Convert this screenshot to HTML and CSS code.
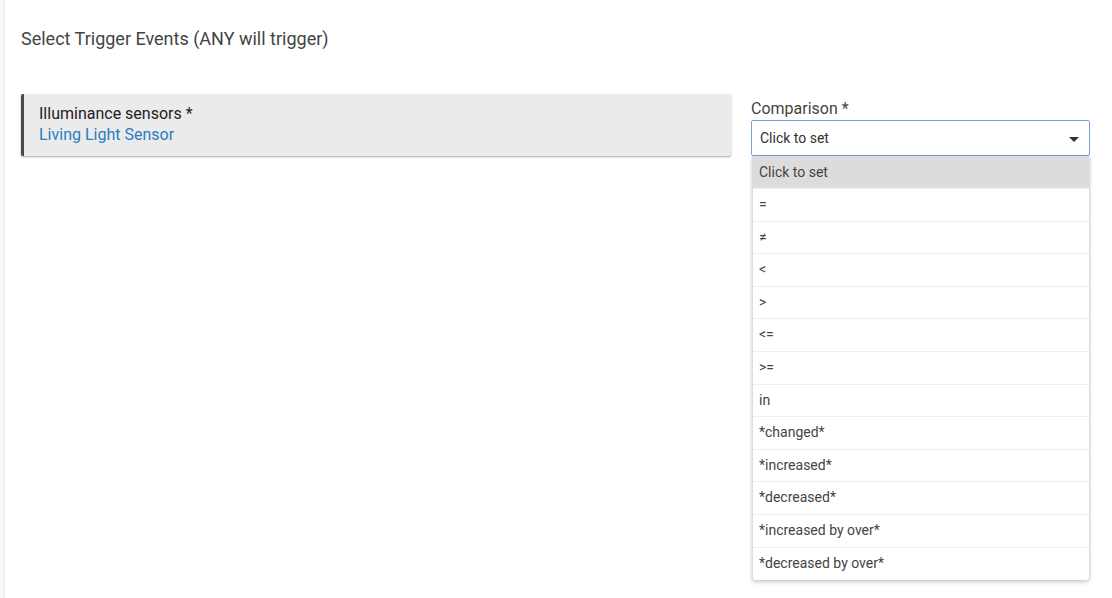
FILE: index.html
```html
<!DOCTYPE html>
<html>
<head>
<meta charset="utf-8">
<link rel="stylesheet" href="styles.css">
</head>
<body>
<div class="page">
  <div class="strip"></div>
  <main class="main">
    <h2 class="title">Select Trigger Events (ANY will trigger)</h2>
    <div class="row">
      <div class="card">
        <div class="card-label">Illuminance sensors *</div>
        <div class="card-value">Living Light Sensor</div>
      </div>
      <div class="field">
        <div class="field-label">Comparison *</div>
        <div class="select">
          <span class="select-text">Click to set</span>
          <span class="caret"></span>
          <ul class="menu">
            <li class="item active">Click to set</li>
            <li class="item">=</li>
            <li class="item">≠</li>
            <li class="item">&lt;</li>
            <li class="item">&gt;</li>
            <li class="item">&lt;=</li>
            <li class="item">&gt;=</li>
            <li class="item">in</li>
            <li class="item">*changed*</li>
            <li class="item">*increased*</li>
            <li class="item">*decreased*</li>
            <li class="item">*increased by over*</li>
            <li class="item">*decreased by over*</li>
          </ul>
        </div>
      </div>
    </div>
  </main>
</div>
</body>
</html>
```

FILE: styles.css
```css
*, *::before, *::after {
  box-sizing: border-box;
}

html, body {
  margin: 0;
  padding: 0;
  background: #ffffff;
  font-family: Roboto, "Liberation Sans", sans-serif;
}

.page {
  display: flex;
  min-height: 598px;
}

.strip {
  width: 5px;
  background: #f7f7f7;
  border-right: 1px solid #e8e8e8;
  flex: none;
}

.main {
  flex: 1;
  padding: 26px 22px 0 16px;
}

.title {
  margin: 0;
  font-size: 18px;
  font-weight: 400;
  line-height: 26px;
  color: #444;
}

.row {
  display: flex;
  align-items: flex-start;
  gap: 20px;
  margin-top: 42px;
}

.card {
  width: 710px;
  flex: none;
  background: #ebebeb;
  border-left: 3px solid #4a4a4a;
  border-radius: 2px;
  box-shadow: 0 1px 2px rgba(0,0,0,0.35);
  padding: 9px 16px 11px 15px;
  font-size: 16px;
  line-height: 21px;
}

.card-label {
  color: #222;
}

.card-value {
  color: #2a7bc4;
}

.field {
  flex: 1;
  margin-top: 5px;
}

.field-label {
  font-size: 16px;
  line-height: 19px;
  color: #444;
  margin-bottom: 2px;
}

.select {
  position: relative;
  height: 36px;
  border: 1px solid #7d9fe0;
  border-radius: 2px;
  display: flex;
  align-items: center;
  padding: 0 10px 0 8px;
}

.select-text {
  flex: 1;
  font-size: 14px;
  color: #333;
}

.caret {
  width: 0;
  height: 0;
  border-left: 5px solid transparent;
  border-right: 5px solid transparent;
  border-top: 5px solid #333;
  margin-top: 2px;
}

.menu {
  position: absolute;
  top: 35px;
  left: 0;
  right: 0;
  margin: 0;
  padding: 0;
  list-style: none;
  background: #fff;
  border-left: 1px solid #ddd;
  box-shadow: 0 2px 4px rgba(0,0,0,0.2), 1px 0 3px rgba(0,0,0,0.1);
  border-radius: 0 0 3px 3px;
  z-index: 10;
}

.item {
  height: 32.6px;
  line-height: 31.6px;
  padding-left: 6px;
  font-size: 14px;
  color: #444;
  border-bottom: 1px solid #eee;
}

.item:last-child {
  border-bottom: none;
}

.item.active {
  background: #dcdcdc;
  height: 33px;
  line-height: 33px;
}
```
